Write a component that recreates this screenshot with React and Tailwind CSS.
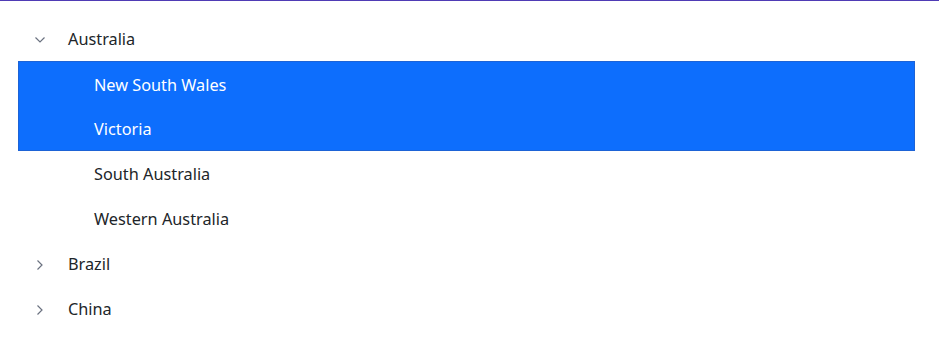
import React, { useState } from "react";

const data = [
  {
    id: "au",
    label: "Australia",
    children: [
      { id: "nsw", label: "New South Wales" },
      { id: "vic", label: "Victoria" },
      { id: "sa", label: "South Australia" },
      { id: "wa", label: "Western Australia" },
    ],
  },
  { id: "br", label: "Brazil", children: [{ id: "sp", label: "São Paulo" }] },
  { id: "cn", label: "China", children: [{ id: "bj", label: "Beijing" }] },
];

function Chevron({ open }) {
  return (
    <svg
      width="12"
      height="12"
      viewBox="0 0 12 12"
      className={open ? "" : "-rotate-90"}
    >
      <path d="M1.5 3.5 L6 8 L10.5 3.5" fill="none" stroke="#6b7280" strokeWidth="1.2" />
    </svg>
  );
}

export default function App() {
  const [expanded, setExpanded] = useState({ au: true });
  const selected = ["nsw", "vic"];

  return (
    <div className="w-[939px] h-[342px] bg-white border-t border-[#4f3bb5] pt-[15px] pl-[18px] pr-[24px] font-['Noto_Sans',sans-serif] text-[16.3px] text-[#212529]">
      <ul>
        {data.map((node) => (
          <li key={node.id}>
            <div
              className="h-[45px] pt-[2px] flex items-center cursor-pointer"
              onClick={() => setExpanded((p) => ({ ...p, [node.id]: !p[node.id] }))}
            >
              <span className="w-[50px] flex justify-start pl-[16px]">
                <Chevron open={expanded[node.id]} />
              </span>
              <span>{node.label}</span>
            </div>
            {expanded[node.id] && (
              <ul>
                {node.children.map((c, i) => {
                  const sel = selected.includes(c.id);
                  return (
                    <li
                      key={c.id}
                      className={
                        "h-[45px] pt-[2px] flex items-center " +
                        (sel
                          ? "pl-[75px] bg-[#0d6efd] text-white border-x border-[#1d63d6] " +
                            (i === 0 ? "border-t " : "") +
                            (i === 1 ? "border-b " : "")
                          : "pl-[76px]")
                      }
                    >
                      {c.label}
                    </li>
                  );
                })}
              </ul>
            )}
          </li>
        ))}
      </ul>
    </div>
  );
}
